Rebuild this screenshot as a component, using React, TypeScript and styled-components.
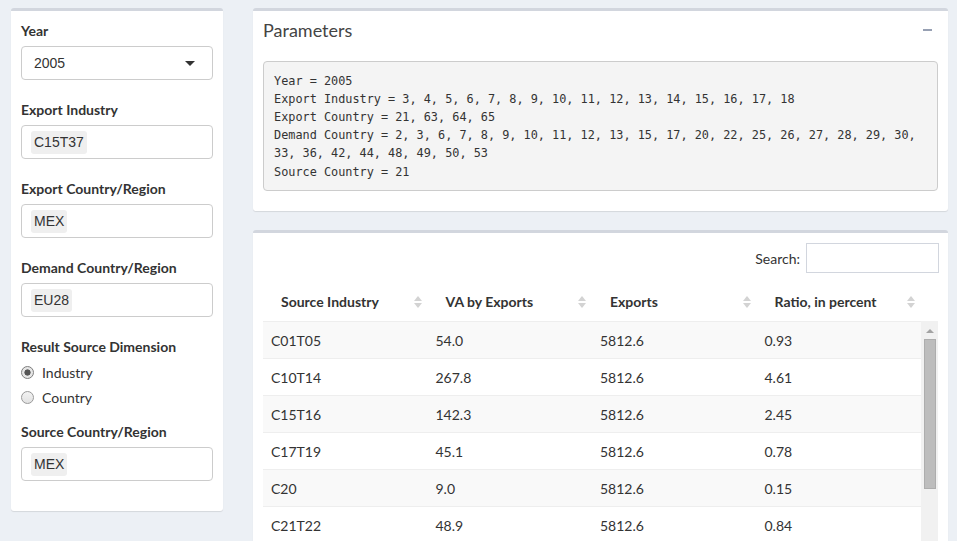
import React from 'react';
import styled, { createGlobalStyle } from 'styled-components';

const GlobalStyle = createGlobalStyle`
  html, body { margin: 0; padding: 0; overflow: hidden; }
  body {
    background: #ecf0f5;
    font-family: Lato, "Noto Sans", sans-serif;
    color: #333;
    font-size: 14px;
  }
  * { box-sizing: border-box; }
`;

const Page = styled.div`
  display: grid;
  grid-template-columns: 212px 695px;
  column-gap: 30px;
  padding: 8px 0 0 11px;
  align-items: start;
`;

const Box = styled.section`
  background: #fff;
  border-top: 3px solid #d2d6de;
  border-radius: 3px;
  box-shadow: 0 1px 1px rgba(0, 0, 0, 0.1);
`;

const Sidebar = styled(Box)`
  padding: 10px;
`;

const Field = styled.div<{ $gap?: number }>`
  margin-bottom: ${(p) => (p.$gap ?? 20)}px;
`;

const Label = styled.div`
  font-weight: 700;
  font-size: 14px;
  line-height: 20px;
  margin-bottom: 5px;
  color: #333;
`;

const SelectBox = styled.div`
  height: 34px;
  border: 1px solid #ccc;
  border-radius: 4px;
  display: flex;
  align-items: center;
  justify-content: space-between;
  padding: 0 12px;
  font-family: "Liberation Sans", Arial, sans-serif;
  font-size: 14px;
  color: #333;
`;

const Caret = styled.span`
  width: 0;
  height: 0;
  border-left: 5px solid transparent;
  border-right: 5px solid transparent;
  border-top: 5px solid #333;
  margin-right: 5px;
`;

const MultiBox = styled.div`
  height: 34px;
  border: 1px solid #ccc;
  border-radius: 4px;
  display: flex;
  align-items: center;
  padding: 0 9px;
  font-family: "Liberation Sans", Arial, sans-serif;
  font-size: 14px;
  color: #333;
`;

const Pill = styled.span`
  background: #efefef;
  border-radius: 3px;
  padding: 0 3px;
  line-height: 23px;
`;

const RadioList = styled.div`
  display: flex;
  flex-direction: column;
  gap: 5px;
`;

const RadioRow = styled.label`
  display: flex;
  align-items: center;
  gap: 8px;
  height: 20px;
  font-size: 14px;
  color: #333;
`;

const RadioDot = styled.span<{ $checked?: boolean }>`
  width: 13px;
  height: 13px;
  border-radius: 50%;
  border: 1px solid ${(p) => (p.$checked ? '#7d7d7d' : '#9a9a9a')};
  background: ${(p) =>
    p.$checked
      ? 'radial-gradient(circle, #555 0 2.8px, #e6e6e6 3.4px)'
      : 'linear-gradient(#f2f2f2, #e2e2e2)'};
`;

const Main = styled.div`
  display: flex;
  flex-direction: column;
  gap: 19px;
`;

const BoxHeader = styled.div`
  display: flex;
  justify-content: space-between;
  align-items: center;
  padding: 9px 10px 11px;
`;

const BoxTitle = styled.h3`
  margin: 0;
  font-size: 18px;
  line-height: 20px;
  font-weight: 400;
  color: #444;
`;

const CollapseIcon = styled.span`
  width: 9px;
  height: 2px;
  background: #97a0b3;
  margin: 0 6px 0 0;
`;

const ParamBody = styled.div`
  padding: 10px 10px 20px;
`;

const Pre = styled.pre`
  margin: 0;
  padding: 9.5px 10px;
  background: #f4f4f4;
  border: 1px solid #ccc;
  border-radius: 4px;
  font-family: "DejaVu Sans Mono", "Liberation Mono", monospace;
  font-size: 11.85px;
  line-height: 18.2px;
  color: #333;
  white-space: pre;
`;

const TableBox = styled(Box)`
  padding: 10px 10px 0;
`;

const SearchRow = styled.div`
  display: flex;
  justify-content: flex-end;
  align-items: center;
  gap: 6px;
  font-size: 14px;
  color: #333;
`;

const SearchInput = styled.div`
  width: 133px;
  height: 30px;
  border: 1px solid #d2d6de;
  margin-right: -1px;
`;

const HeadRow = styled.div`
  margin-top: 8px;
  display: grid;
  grid-template-columns: repeat(4, 1fr) 17px;
`;

const HeadCell = styled.div`
  display: flex;
  align-items: center;
  justify-content: space-between;
  padding: 11px 6px 9px 18px;
  font-weight: 700;
  line-height: 20px;
  color: #333;
`;

const BodyWrap = styled.div`
  display: flex;
  height: 230px;
  overflow: hidden;
`;

const Rows = styled.div`
  flex: 1;
`;

const Row = styled.div<{ $odd: boolean }>`
  display: grid;
  grid-template-columns: repeat(4, 1fr);
  background: ${(p) => (p.$odd ? '#f9f9f9' : '#fff')};
  border-top: 1px solid #eee;
`;

const Cell = styled.div`
  padding: 9px 8px 7px;
  line-height: 20px;
  color: #333;
`;

const Track = styled.div`
  width: 17px;
  background: #f1f1f1;
  display: flex;
  flex-direction: column;
  align-items: center;
  padding-top: 1px;
`;

const ArrowBtn = styled.div`
  height: 17px;
  display: flex;
  align-items: center;
  justify-content: center;
  &::before {
    content: '';
    border-left: 4px solid transparent;
    border-right: 4px solid transparent;
    border-bottom: 4px solid #a3a3a3;
  }
`;

const Thumb = styled.div`
  width: 12px;
  height: 150px;
  background: #bdbdbd;
  border: 1px solid #adadad;
`;

const SortIcon = () => (
  <svg width="8" height="14" viewBox="0 0 8 14">
    <polygon points="0,6 4,1 8,6" fill="#d3d3d3" />
    <polygon points="0,8 4,13 8,8" fill="#d3d3d3" />
  </svg>
);

const headers = ['Source Industry', 'VA by Exports', 'Exports', 'Ratio, in percent'];
const rows = [
  ['C01T05', '54.0', '5812.6', '0.93'],
  ['C10T14', '267.8', '5812.6', '4.61'],
  ['C15T16', '142.3', '5812.6', '2.45'],
  ['C17T19', '45.1', '5812.6', '0.78'],
  ['C20', '9.0', '5812.6', '0.15'],
  ['C21T22', '48.9', '5812.6', '0.84'],
];

const paramText = `Year = 2005
Export Industry = 3, 4, 5, 6, 7, 8, 9, 10, 11, 12, 13, 14, 15, 16, 17, 18
Export Country = 21, 63, 64, 65
Demand Country = 2, 3, 6, 7, 8, 9, 10, 11, 12, 13, 15, 17, 20, 22, 25, 26, 27, 28, 29, 30,
33, 36, 42, 44, 48, 49, 50, 53
Source Country = 21`;

export default function App() {
  return (
    <>
      <GlobalStyle />
      <Page>
        <Sidebar>
          <Field>
            <Label>Year</Label>
            <SelectBox>
              <span>2005</span>
              <Caret />
            </SelectBox>
          </Field>
          <Field>
            <Label>Export Industry</Label>
            <MultiBox>
              <Pill>C15T37</Pill>
            </MultiBox>
          </Field>
          <Field>
            <Label>Export Country/Region</Label>
            <MultiBox>
              <Pill>MEX</Pill>
            </MultiBox>
          </Field>
          <Field>
            <Label>Demand Country/Region</Label>
            <MultiBox>
              <Pill>EU28</Pill>
            </MultiBox>
          </Field>
          <Field $gap={15}>
            <Label>Result Source Dimension</Label>
            <RadioList>
              <RadioRow>
                <RadioDot $checked />
                Industry
              </RadioRow>
              <RadioRow>
                <RadioDot />
                Country
              </RadioRow>
            </RadioList>
          </Field>
          <Field>
            <Label>Source Country/Region</Label>
            <MultiBox>
              <Pill>MEX</Pill>
            </MultiBox>
          </Field>
        </Sidebar>
        <Main>
          <Box>
            <BoxHeader>
              <BoxTitle>Parameters</BoxTitle>
              <CollapseIcon />
            </BoxHeader>
            <ParamBody>
              <Pre>{paramText}</Pre>
            </ParamBody>
          </Box>
          <TableBox>
            <SearchRow>
              <span>Search:</span>
              <SearchInput />
            </SearchRow>
            <HeadRow>
              {headers.map((h) => (
                <HeadCell key={h}>
                  <span>{h}</span>
                  <SortIcon />
                </HeadCell>
              ))}
              <div />
            </HeadRow>
            <BodyWrap>
              <Rows>
                {rows.map((r, i) => (
                  <Row key={r[0]} $odd={i % 2 === 0}>
                    {r.map((c, j) => (
                      <Cell key={j}>{c}</Cell>
                    ))}
                  </Row>
                ))}
              </Rows>
              <Track>
                <ArrowBtn />
                <Thumb />
              </Track>
            </BodyWrap>
          </TableBox>
        </Main>
      </Page>
    </>
  );
}
